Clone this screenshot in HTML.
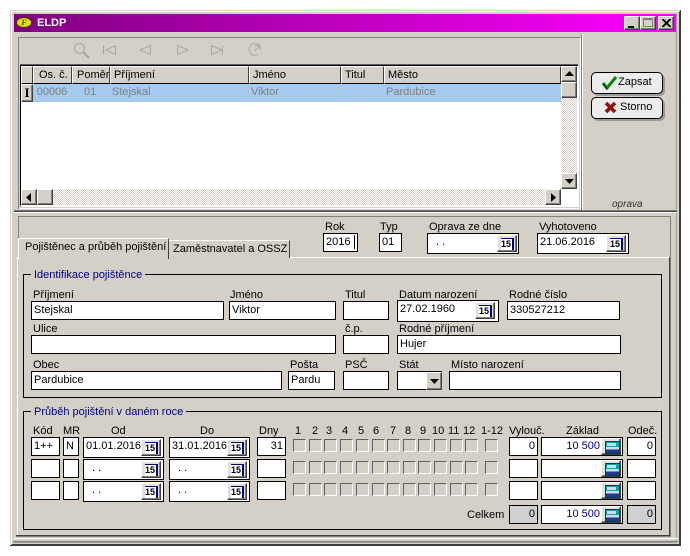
<!DOCTYPE html>
<html><head><meta charset="utf-8"><style>
html,body{margin:0;padding:0;background:#fff}
#w{position:relative;width:690px;height:556px;overflow:hidden;background:#fff;font:11px "Liberation Sans",sans-serif;color:#000}
#w div,#w span.a{position:absolute;box-sizing:border-box;white-space:nowrap}
.g{background:#d4d0c8}
.f{background:#fff;border:1px solid #000;height:19px;line-height:16px;padding-left:2px;overflow:hidden}
.r{text-align:right;padding:0 2px 0 0}
.l{height:14px;line-height:14px}
.c{background:#e4e1da;width:20px;height:17px;border:1px solid;border-color:#fff #404040 #404040 #fff;box-shadow:inset -1px -1px 0 #808080;text-align:center}
.c span{display:inline-block;width:11px;height:11px;margin-top:2px;font:bold 9px/10px "Liberation Sans",sans-serif;color:#000;background:#fff;border-top:1px solid #000080;border-right:2px solid #000080}
.k{width:13px;height:13px;border:1px solid;border-color:#606060 #fff #fff #606060;background:#d4d0c8}
.h{top:66px;height:18px;background:#d4d0c8;border-left:1px solid #fff;border-top:1px solid #fff;border-right:1px solid #404040;border-bottom:1px solid #000;line-height:16px;padding-left:3px;color:#000}
.t{top:84px;height:18px;line-height:17px;color:#7f7f7f;border-right:1px solid #b0c4d8;padding-left:2px}
.s{background:#d4d0c8;border:1px solid;border-color:#fff #404040 #404040 #fff;box-shadow:inset -1px -1px 0 #808080}
.ch{background-color:#fff;background-image:conic-gradient(#d4d0c8 25%,#fff 0 50%,#d4d0c8 0 75%,#fff 0);background-size:2px 2px}
.b{background:#ececec;border:1px solid #000;border-radius:5px;line-height:19px;box-shadow:2px 2px 0 #9a9a9a}
.calc{width:20px;height:17px;background:#e4e1da;border:1px solid;border-color:#fff #404040 #404040 #fff;box-shadow:inset -1px -1px 0 #808080}
.calc span{position:absolute;left:3px;top:2px;width:13px;height:11px;background:linear-gradient(#10a0a8 0 45%,#c8e0e8 45% 70%,#20388c 70%);border:1px solid #004050}
.calc i{position:absolute;left:5px;top:4px;width:9px;height:3px;background:#d0dce4}
.n{color:#000080}
</style></head><body><div id="w">

<!-- outer frame -->
<div class="g" style="left:10px;top:10px;width:671px;height:536px"></div>
<div style="left:11px;top:11px;width:669px;height:534px;border:1px solid;border-color:#fff #404040 #404040 #fff"></div>
<div style="left:10px;top:545px;width:671px;height:1px;background:#404040"></div>
<div style="left:680px;top:10px;width:1px;height:536px;background:#404040"></div>
<div style="left:13px;top:13px;width:664px;height:530px;border:1px solid;border-color:#d4d0c8 #a0a0a0 #a0a0a0 #d4d0c8"></div>

<!-- title bar -->
<div style="left:14px;top:14px;width:662px;height:18px;background:linear-gradient(90deg,#800080,#ff00ff)"></div>
<div style="left:16px;top:17px;width:16px;height:11px;border-radius:50%;background:#e6e000;border:1px solid #404000;font:italic bold 8px/9px 'Liberation Serif',serif;text-align:center;color:#504000">F</div>
<div style="left:37px;top:15px;height:16px;line-height:16px;color:#fff;font-weight:bold;font-size:11px">ELDP</div>
<div class="s" style="left:624px;top:16px;width:16px;height:14px"><div style="left:3px;top:9px;width:6px;height:2px;background:#000"></div></div>
<div class="s" style="left:640px;top:16px;width:16px;height:14px"><div style="left:2px;top:1px;width:10px;height:9px;border:1px solid #808080;border-top-width:2px"></div></div>
<div class="s" style="left:658px;top:16px;width:16px;height:14px"><svg style="position:absolute;left:3px;top:2px" width="9" height="8"><path d="M0 0L8 8M1 0L9 8M8 0L0 8M9 0L1 8" stroke="#000" stroke-width="1.2"/></svg></div>

<!-- top left panel -->
<div style="left:18px;top:37px;width:563px;height:172px;border:1px solid;border-color:#808080 #fff #fff #808080;border-top-width:1px"></div>
<div style="left:18px;top:38px;width:1px;height:171px;background:#808080"></div>

<!-- toolbar icons -->
<svg style="position:absolute;left:70px;top:40px" width="200" height="20" fill="none" stroke="#a8a8a0" stroke-width="1">
<circle cx="9.5" cy="8.5" r="5"/><path d="M13 12L19 18" stroke-width="2"/>
<path d="M33.5 5.5V14.5M45.5 5.5V14.5L36 10L45.5 5.5"/>
<path d="M80.5 5.5V14.5L70 10Z"/>
<path d="M107.5 5.5V14.5L118 10Z"/>
<path d="M141.5 5.5V14.5L152 10ZM152.5 5.5V14.5"/>
<path d="M190 6A6 6 0 1 0 188 14.500M184 11L190 6M184.500 5.500H190V10"/>
</svg>

<!-- grid -->
<div style="left:20px;top:64px;width:559px;height:143px;background:#fff;border:1px solid;border-color:#606060 #fff #fff #606060"></div>
<div style="left:21px;top:65px;width:557px;height:1px;background:#000"></div>
<div style="left:20px;top:65px;width:1px;height:140px;background:#000"></div>
<div class="h" style="left:21px;width:12px"></div>
<div class="h" style="left:33px;width:39px;padding-left:5px">Os. č.</div>
<div class="h" style="left:72px;width:38px;padding-left:4px">Poměr</div>
<div class="h" style="left:110px;width:139px">Příjmení</div>
<div class="h" style="left:249px;width:92px">Jméno</div>
<div class="h" style="left:341px;width:43px">Titul</div>
<div class="h" style="left:384px;width:177px">Město</div>
<div class="s" style="left:21px;top:84px;width:12px;height:18px;font:bold 13px/15px 'Liberation Serif',serif;text-align:center;padding-left:0">I</div>
<div style="left:33px;top:84px;width:528px;height:18px;background:#a6caf0"></div>
<div class="t" style="left:33px;width:39px;text-align:center;padding:0">00006</div>
<div class="t" style="left:72px;width:38px;padding-left:12px">01</div>
<div class="t" style="left:110px;width:139px">Stejskal</div>
<div class="t" style="left:249px;width:92px">Viktor</div>
<div class="t" style="left:341px;width:43px"></div>
<div class="t" style="left:384px;width:177px;border:0">Pardubice</div>

<!-- v scrollbar -->
<div class="ch" style="left:561px;top:66px;width:16px;height:123px"></div>
<div class="s" style="left:561px;top:66px;width:16px;height:16px"><svg style="position:absolute;left:3px;top:4px" width="9" height="6"><path d="M4.500 0L9 5H0Z"/></svg></div>
<div class="s" style="left:561px;top:82px;width:16px;height:16px"></div>
<div class="s" style="left:561px;top:173px;width:16px;height:16px"><svg style="position:absolute;left:3px;top:5px" width="9" height="6"><path d="M4.500 5L9 0H0Z"/></svg></div>
<!-- h scrollbar -->
<div class="ch" style="left:21px;top:189px;width:540px;height:16px"></div>
<div class="s" style="left:21px;top:189px;width:16px;height:16px"><svg style="position:absolute;left:4px;top:3px" width="6" height="9"><path d="M0 4.500L5 0V9Z"/></svg></div>
<div class="s" style="left:37px;top:189px;width:16px;height:16px"></div>
<div class="s" style="left:545px;top:189px;width:16px;height:16px"><svg style="position:absolute;left:5px;top:3px" width="6" height="9"><path d="M5 4.500L0 0V9Z"/></svg></div>

<!-- right panel -->
<div style="left:581px;top:34px;width:1px;height:176px;background:#808080"></div>
<div style="left:582px;top:34px;width:1px;height:176px;background:#fff"></div>
<div class="b" style="left:591px;top:72px;width:72px;height:22px;padding-left:26px">Zapsat</div>
<svg style="position:absolute;left:602px;top:76px" width="16" height="14"><path d="M1 7L5 12L14 1" fill="none" stroke="#108010" stroke-width="3"/><path d="M1 8L5 13" stroke="#002800"/></svg>
<div class="b" style="left:591px;top:97px;width:72px;height:22px;padding-left:28px">Storno</div>
<svg style="position:absolute;left:604px;top:101px" width="13" height="13"><path d="M2 2L11 11M11 2L2 11" stroke="#901010" stroke-width="3.600"/></svg>
<div style="left:612px;top:199px;height:12px;font:italic 10px/12px 'Liberation Sans',sans-serif;color:#303030">oprava</div>

<!-- separator -->
<div style="left:14px;top:210px;width:663px;height:1px;background:#808080"></div>
<div style="left:14px;top:211px;width:663px;height:1px;background:#404040"></div>
<div style="left:14px;top:212px;width:663px;height:1px;background:#fff"></div>

<!-- tabs area panel -->
<div style="left:18px;top:216px;width:653px;height:1px;background:#808080"></div>
<div style="left:18px;top:216px;width:1px;height:22px;background:#808080"></div>
<div style="left:169px;top:257px;width:500px;height:1px;background:#fff"></div>
<div style="left:669px;top:257px;width:1px;height:278px;background:#404040"></div>
<div style="left:670px;top:216px;width:1px;height:321px;background:#808080"></div>
<div style="left:17px;top:257px;width:1px;height:279px;background:#fff"></div>
<div style="left:16px;top:535px;width:654px;height:1px;background:#404040"></div>
<div style="left:16px;top:536px;width:654px;height:1px;background:#808080"></div>
<div style="left:14px;top:538px;width:664px;height:1px;background:#fff"></div>
<div style="left:13px;top:541px;width:665px;height:1px;background:#808080"></div>

<!-- tabs -->
<div style="left:18px;top:238px;width:151px;height:21px;background:#d4d0c8;border-top:1px solid #fff;border-left:1px solid #fff;border-right:1px solid #404040;border-radius:2px 2px 0 0;line-height:17px;padding-left:6px">Pojištěnec a průběh pojištění</div>
<div style="left:169px;top:240px;width:121px;height:18px;background:#d4d0c8;border-top:1px solid #fff;border-right:1px solid #404040;line-height:17px;padding-left:4px">Zaměstnavatel a OSSZ</div>

<!-- header fields -->
<div class="l" style="left:325px;top:220px">Rok</div>
<div class="l" style="left:380px;top:220px">Typ</div>
<div class="l" style="left:429px;top:220px">Oprava ze dne</div>
<div class="l" style="left:539px;top:220px">Vyhotoveno</div>
<div class="f" style="left:323px;top:233px;width:35px">2016</div>
<div style="left:354px;top:235px;width:1px;height:14px;background:#000"></div>
<div class="f" style="left:379px;top:233px;width:23px">01</div>
<div class="f" style="left:427px;top:233px;width:92px;height:21px;padding-left:8px"> . .</div>
<div class="c" style="left:497px;top:235px"><span>15</span></div>
<div class="f" style="left:537px;top:233px;width:92px;height:21px">21.06.2016</div>
<div class="c" style="left:606px;top:235px"><span>15</span></div>

<!-- group 1 -->
<div style="left:23px;top:274px;width:639px;height:124px;border:1px solid #000"></div>
<div class="g n l" style="left:31px;top:268px;padding:0 3px">Identifikace pojištěnce</div>
<div class="l" style="left:33px;top:288px">Příjmení</div>
<div class="l" style="left:230px;top:288px">Jméno</div>
<div class="l" style="left:345px;top:288px">Titul</div>
<div class="l" style="left:399px;top:288px">Datum narození</div>
<div class="l" style="left:509px;top:288px">Rodné číslo</div>
<div class="f" style="left:31px;top:301px;width:193px">Stejskal</div>
<div class="f" style="left:229px;top:301px;width:107px">Viktor</div>
<div class="f" style="left:343px;top:301px;width:46px"></div>
<div class="f" style="left:397px;top:300px;width:102px;height:22px">27.02.1960</div>
<div class="c" style="left:475px;top:302px"><span>15</span></div>
<div class="f" style="left:507px;top:301px;width:113px">330527212</div>

<div class="l" style="left:33px;top:322px">Ulice</div>
<div class="l" style="left:345px;top:322px">č.p.</div>
<div class="l" style="left:399px;top:322px">Rodné příjmení</div>
<div class="f" style="left:31px;top:335px;width:305px"></div>
<div class="f" style="left:343px;top:335px;width:46px"></div>
<div class="f" style="left:397px;top:335px;width:224px">Hujer</div>

<div class="l" style="left:33px;top:358px">Obec</div>
<div class="l" style="left:290px;top:358px">Pošta</div>
<div class="l" style="left:345px;top:358px">PSČ</div>
<div class="l" style="left:399px;top:358px">Stát</div>
<div class="l" style="left:451px;top:358px">Místo narození</div>
<div class="f" style="left:31px;top:371px;width:251px">Pardubice</div>
<div class="f" style="left:288px;top:371px;width:47px">Pardu</div>
<div class="f" style="left:343px;top:371px;width:46px"></div>
<div class="f" style="left:397px;top:371px;width:45px"></div>
<div class="s" style="left:426px;top:372px;width:16px;height:18px"><svg style="position:absolute;left:3px;top:6px" width="9" height="5"><path d="M0 0H9L4.500 5Z"/></svg></div>
<div class="f" style="left:449px;top:371px;width:172px"></div>

<!-- group 2 -->
<div style="left:23px;top:411px;width:639px;height:119px;border:1px solid #000"></div>
<div class="g n l" style="left:31px;top:405px;padding:0 3px">Průběh pojištění v daném roce</div>

<div class="l" style="left:33px;top:424px">Kód</div>
<div class="l" style="left:63px;top:424px">MR</div>
<div class="l" style="left:111px;top:424px">Od</div>
<div class="l" style="left:200px;top:424px">Do</div>
<div class="l" style="left:259px;top:424px">Dny</div>
<div class="l" style="left:295px;top:424px">1</div>
<div class="l" style="left:312px;top:424px">2</div>
<div class="l" style="left:326px;top:424px">3</div>
<div class="l" style="left:342px;top:424px">4</div>
<div class="l" style="left:358px;top:424px">5</div>
<div class="l" style="left:373px;top:424px">6</div>
<div class="l" style="left:390px;top:424px">7</div>
<div class="l" style="left:405px;top:424px">8</div>
<div class="l" style="left:420px;top:424px">9</div>
<div class="l" style="left:432px;top:424px">10</div>
<div class="l" style="left:448px;top:424px">11</div>
<div class="l" style="left:463px;top:424px">12</div>
<div class="l" style="left:481px;top:424px">1-12</div>
<div class="l" style="left:509px;top:424px">Vylouč.</div>
<div class="l" style="left:566px;top:424px">Základ</div>
<div class="l" style="left:628px;top:424px">Odeč.</div>

<!-- row 1 -->
<div class="f" style="left:31px;top:437px;width:29px">1++</div>
<div class="f" style="left:63px;top:437px;width:16px">N</div>
<div class="f" style="left:83px;top:437px;width:81px;height:21px;padding-left:2px">01.01.2016</div>
<div class="c" style="left:141px;top:439px"><span>15</span></div>
<div class="f" style="left:169px;top:437px;width:81px;height:21px">31.01.2016</div>
<div class="c" style="left:227px;top:439px"><span>15</span></div>
<div class="f r" style="left:257px;top:437px;width:29px">31</div>
<div class="f r" style="left:509px;top:437px;width:29px">0</div>
<div class="f r n" style="left:541px;top:437px;width:82px;padding-right:22px">10 500</div>
<div class="calc" style="left:601px;top:438px"><span></span><i></i></div>
<div class="f r" style="left:627px;top:437px;width:29px">0</div>

<!-- row 2 -->
<div class="f" style="left:31px;top:459px;width:29px"></div>
<div class="f" style="left:63px;top:459px;width:16px"></div>
<div class="f" style="left:83px;top:459px;width:81px;height:21px;padding-left:8px"> . .</div>
<div class="c" style="left:141px;top:461px"><span>15</span></div>
<div class="f" style="left:169px;top:459px;width:81px;height:21px;padding-left:8px"> . .</div>
<div class="c" style="left:227px;top:461px"><span>15</span></div>
<div class="f" style="left:257px;top:459px;width:29px"></div>
<div class="f" style="left:509px;top:459px;width:29px"></div>
<div class="f" style="left:541px;top:459px;width:82px"></div>
<div class="calc" style="left:601px;top:460px"><span></span><i></i></div>
<div class="f" style="left:627px;top:459px;width:29px"></div>

<!-- row 3 -->
<div class="f" style="left:31px;top:481px;width:29px"></div>
<div class="f" style="left:63px;top:481px;width:16px"></div>
<div class="f" style="left:83px;top:481px;width:81px;height:21px;padding-left:8px"> . .</div>
<div class="c" style="left:141px;top:483px"><span>15</span></div>
<div class="f" style="left:169px;top:481px;width:81px;height:21px;padding-left:8px"> . .</div>
<div class="c" style="left:227px;top:483px"><span>15</span></div>
<div class="f" style="left:257px;top:481px;width:29px"></div>
<div class="f" style="left:509px;top:481px;width:29px"></div>
<div class="f" style="left:541px;top:481px;width:82px"></div>
<div class="calc" style="left:601px;top:482px"><span></span><i></i></div>
<div class="f" style="left:627px;top:481px;width:29px"></div>

<!-- checkboxes -->
<div class="k" style="left:293px;top:439px"></div><div class="k" style="left:309px;top:439px"></div><div class="k" style="left:324px;top:439px"></div><div class="k" style="left:340px;top:439px"></div><div class="k" style="left:356px;top:439px"></div><div class="k" style="left:372px;top:439px"></div><div class="k" style="left:387px;top:439px"></div><div class="k" style="left:403px;top:439px"></div><div class="k" style="left:418px;top:439px"></div><div class="k" style="left:434px;top:439px"></div><div class="k" style="left:450px;top:439px"></div><div class="k" style="left:465px;top:439px"></div><div class="k" style="left:485px;top:439px"></div>
<div class="k" style="left:293px;top:461px"></div><div class="k" style="left:309px;top:461px"></div><div class="k" style="left:324px;top:461px"></div><div class="k" style="left:340px;top:461px"></div><div class="k" style="left:356px;top:461px"></div><div class="k" style="left:372px;top:461px"></div><div class="k" style="left:387px;top:461px"></div><div class="k" style="left:403px;top:461px"></div><div class="k" style="left:418px;top:461px"></div><div class="k" style="left:434px;top:461px"></div><div class="k" style="left:450px;top:461px"></div><div class="k" style="left:465px;top:461px"></div><div class="k" style="left:485px;top:461px"></div>
<div class="k" style="left:293px;top:483px"></div><div class="k" style="left:309px;top:483px"></div><div class="k" style="left:324px;top:483px"></div><div class="k" style="left:340px;top:483px"></div><div class="k" style="left:356px;top:483px"></div><div class="k" style="left:372px;top:483px"></div><div class="k" style="left:387px;top:483px"></div><div class="k" style="left:403px;top:483px"></div><div class="k" style="left:418px;top:483px"></div><div class="k" style="left:434px;top:483px"></div><div class="k" style="left:450px;top:483px"></div><div class="k" style="left:465px;top:483px"></div><div class="k" style="left:485px;top:483px"></div>

<!-- totals -->
<div class="l" style="left:467px;top:508px">Celkem</div>
<div class="f r" style="left:509px;top:505px;width:29px;background:#d0d0d0">0</div>
<div class="f r n" style="left:541px;top:505px;width:82px;padding-right:22px">10 500</div>
<div class="calc" style="left:601px;top:506px"><span></span><i></i></div>
<div class="f r" style="left:627px;top:505px;width:29px;background:#d0d0d0">0</div>

</div></body></html>
